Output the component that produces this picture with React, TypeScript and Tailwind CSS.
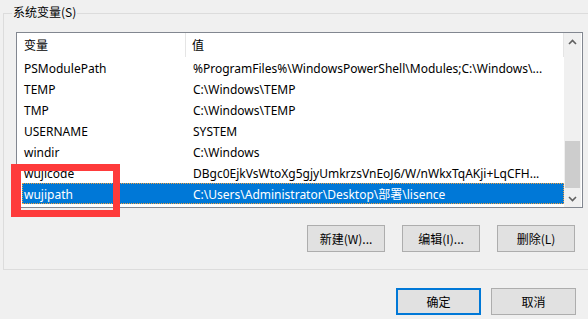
import React from 'react';

const ROWS: { name: string; value: string; selected?: boolean }[] = [
  { name: 'PSModulePath', value: '%ProgramFiles%\\WindowsPowerShell\\Modules;C:\\Windows\\...' },
  { name: 'TEMP', value: 'C:\\Windows\\TEMP' },
  { name: 'TMP', value: 'C:\\Windows\\TEMP' },
  { name: 'USERNAME', value: 'SYSTEM' },
  { name: 'windir', value: 'C:\\Windows' },
  { name: 'wujicode', value: 'DBgc0EjkVsWtoXg5gjyUmkrzsVnEoJ6/W/nWkxTqAKji+LqCFH...' },
  { name: 'wujipath', value: 'C:\\Users\\Administrator\\Desktop\\部署\\lisence', selected: true },
];

function Chevron({ down }: { down?: boolean }) {
  return (
    <svg width="9" height="6" viewBox="0 0 9 6" className={down ? 'rotate-180' : ''}>
      <path d="M1 5 L4.5 1.5 L8 5" fill="none" stroke="#606060" strokeWidth="1.6" />
    </svg>
  );
}

function Button({ label, primary, wide }: { label: string; primary?: boolean; wide?: boolean }) {
  return (
    <div
      className={
        primary
          ? 'flex h-[27px] w-[85px] items-center justify-center border-2 border-[#0078d7] bg-[#e1e1e1]'
          : wide
            ? 'flex h-[27px] w-[85px] items-center justify-center border border-[#adadad] bg-[#e1e1e1]'
            : 'flex h-[27px] w-[78px] items-center justify-center border border-[#adadad] bg-[#e1e1e1]'
      }
    >
      {label}
    </div>
  );
}

export default function App() {
  return (
    <div className="relative h-[319px] w-[588px] overflow-hidden bg-[#f0f0f0] font-['Noto_Sans','Noto_Sans_CJK_SC',sans-serif] text-[12px] leading-none text-black">
      {/* system variables group */}
      <div className="relative ml-[3px] mt-[13px] h-[257px] w-[620px] border border-[#dcdcdc] pl-[12px] pt-[18px]">
        <span className="absolute -top-[8px] left-[8px] bg-[#f0f0f0] px-[1px] font-['Noto_Sans_CJK_SC',sans-serif]">
          系统变量(S)
        </span>

        <div className="flex h-[176px] w-[567px] border border-[#828790] bg-white">
          <div className="flex w-[547px] flex-col">
            <div className="flex h-[24px] items-center">
              <div className="flex h-full w-[169px] items-center border-r border-[#e5e5e5] pl-[7px] font-['Noto_Sans_CJK_SC',sans-serif]">变量</div>
              <div className="flex h-full flex-1 items-center border-r border-[#e5e5e5] pl-[6px] font-['Noto_Sans_CJK_SC',sans-serif]">值</div>
            </div>
            {ROWS.map((r) =>
              r.selected ? (
                <div
                  key={r.name}
                  className="ml-[5px] flex h-[21px] items-center bg-[#0078d7] pt-[2px] text-white outline-1 -outline-offset-1 outline-dotted outline-[#f0a040]"
                >
                  <div className="w-[164px] pl-[2px]">{r.name}</div>
                  <div className="flex-1 whitespace-nowrap pl-[7px]">{r.value}</div>
                </div>
              ) : (
                <div key={r.name} className="flex h-[21px] items-center pt-[2px]">
                  <div className="w-[169px] pl-[7px]">{r.name}</div>
                  <div className="flex-1 whitespace-nowrap pl-[7px]">{r.value}</div>
                </div>
              ),
            )}
          </div>
          <div className="flex w-[17px] flex-col bg-[#f0f0f0]">
            <div className="flex h-[17px] items-center justify-center">
              <Chevron />
            </div>
            <div className="flex-1 px-[1px] pt-[91px]">
              <div className="h-[47px] bg-[#cdcdcd]" />
            </div>
            <div className="flex h-[17px] items-center justify-center">
              <Chevron down />
            </div>
          </div>
        </div>

        <div className="mt-[17px] flex gap-[17px] pl-[291px] font-['Noto_Sans_CJK_SC',sans-serif]">
          <Button label="新建(W)..." />
          <Button label="编辑(I)..." />
          <Button label="删除(L)" />
        </div>
      </div>

      <div className="mt-[18px] flex gap-[10px] pl-[396px] font-['Noto_Sans_CJK_SC',sans-serif]">
        <Button label="确定" primary />
        <Button label="取消" wide />
      </div>

      {/* red highlight annotation */}
      <div className="absolute left-[11px] top-[164px] h-[53px] w-[109px] border-[7px] border-l-[10px] border-[#fe3b3b]" />
    </div>
  );
}
